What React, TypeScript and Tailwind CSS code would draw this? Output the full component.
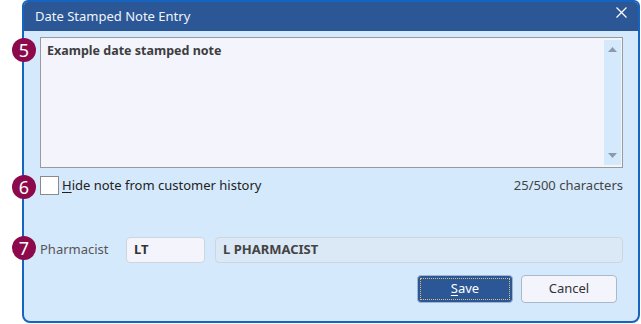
import React from 'react';

const font = { fontFamily: '"Noto Sans", "Open Sans", sans-serif' };

const Badge: React.FC<{ n: number; top: string }> = ({ n, top }) => (
  <div
    className={`absolute left-[12px] ${top} w-[24px] h-[24px] rounded-full bg-[#8c0a4b] text-white flex items-center justify-center text-[18px] leading-none`}
  >
    {n}
  </div>
);

const App: React.FC = () => {
  return (
    <div className="relative w-[641px] h-[324px] bg-white overflow-hidden text-[13px]" style={font}>
      <div className="ml-[22px] w-[618px] h-[323px] border-2 border-[#1565c0] rounded-t-[6px] rounded-b-[8px] bg-[#d5e9fc] flex flex-col overflow-hidden">
        {/* title bar */}
        <div className="h-[29px] bg-[#2b5797] flex items-center justify-between pl-[11px] pr-[11px] shrink-0">
          <span className="text-[#f0f4fa] text-[13px] pt-[1px]">Date Stamped Note Entry</span>
          <svg width="11" height="11" viewBox="0 0 11 11" className="-mt-[9px]">
            <path d="M0.5 0.5 L10.5 10.5 M10.5 0.5 L0.5 10.5" stroke="#fff" strokeWidth="1.2" />
          </svg>
        </div>

        <div className="flex flex-col pl-[16px] pr-[15px] pt-[6px]">
          {/* note area */}
          <div className="h-[131px] border border-[#9a9a9a] bg-[#f4f4fd] flex">
            <div className="flex-1 px-[6px] pt-[4px] font-bold text-[12.5px] text-[#3d3d3d]">Example date stamped note</div>
            <div className="w-[17px] my-[2px] mr-[1px] bg-[#d5e9fc] flex flex-col items-center justify-between py-[7px]">
              <svg width="9" height="5" viewBox="0 0 9 5"><path d="M0 5 L4.5 0 L9 5 Z" fill="#8b9bab" /></svg>
              <svg width="9" height="5" viewBox="0 0 9 5"><path d="M0 0 L4.5 5 L9 0 Z" fill="#8b9bab" /></svg>
            </div>
          </div>

          {/* hide note row */}
          <div className="flex items-center justify-between mt-[8px] h-[19px]">
            <div className="flex items-center gap-[3px]">
              <div className="w-[19px] h-[19px] bg-white border border-[#8a8a8a]" />
              <span className="text-[#222]">
                <span className="underline underline-offset-2">H</span>ide note from customer history
              </span>
            </div>
            <span className="text-[#444]">25/500 characters</span>
          </div>

          {/* pharmacist row */}
          <div className="flex items-center mt-[42px] h-[26px]">
            <span className="w-[86px] text-[#555]">Pharmacist</span>
            <div className="w-[79px] h-[26px] rounded-[4px] border border-[#d0d4dc] bg-[#f4f4fd] font-bold text-[#333] flex items-center px-[7px]">LT</div>
            <div className="flex-1 ml-[10px] h-[26px] rounded-[4px] border border-[#d0d4dc] bg-[#dbe8f6] font-bold text-[#444] flex items-center px-[7px]">L PHARMACIST</div>
          </div>

          {/* buttons */}
          <div className="flex justify-end gap-[8px] mt-[12px] pr-[6px]">
            <button className="w-[96px] h-[28px] rounded-[4px] bg-[#2b5797] border border-[#9fb4d0] p-[2px]">
              <div className="w-full h-full border border-dotted border-[#e0c070] flex items-center justify-center text-white">
                <span><span className="underline underline-offset-2">S</span>ave</span>
              </div>
            </button>
            <button className="w-[96px] h-[28px] rounded-[4px] bg-[#f4f4fd] border border-[#aab8cc] text-[#333] flex items-center justify-center">
              Cancel
            </button>
          </div>
        </div>
      </div>

      <Badge n={5} top="top-[38px]" />
      <Badge n={6} top="top-[175px]" />
      <Badge n={7} top="top-[236px]" />
    </div>
  );
};

export default App;
